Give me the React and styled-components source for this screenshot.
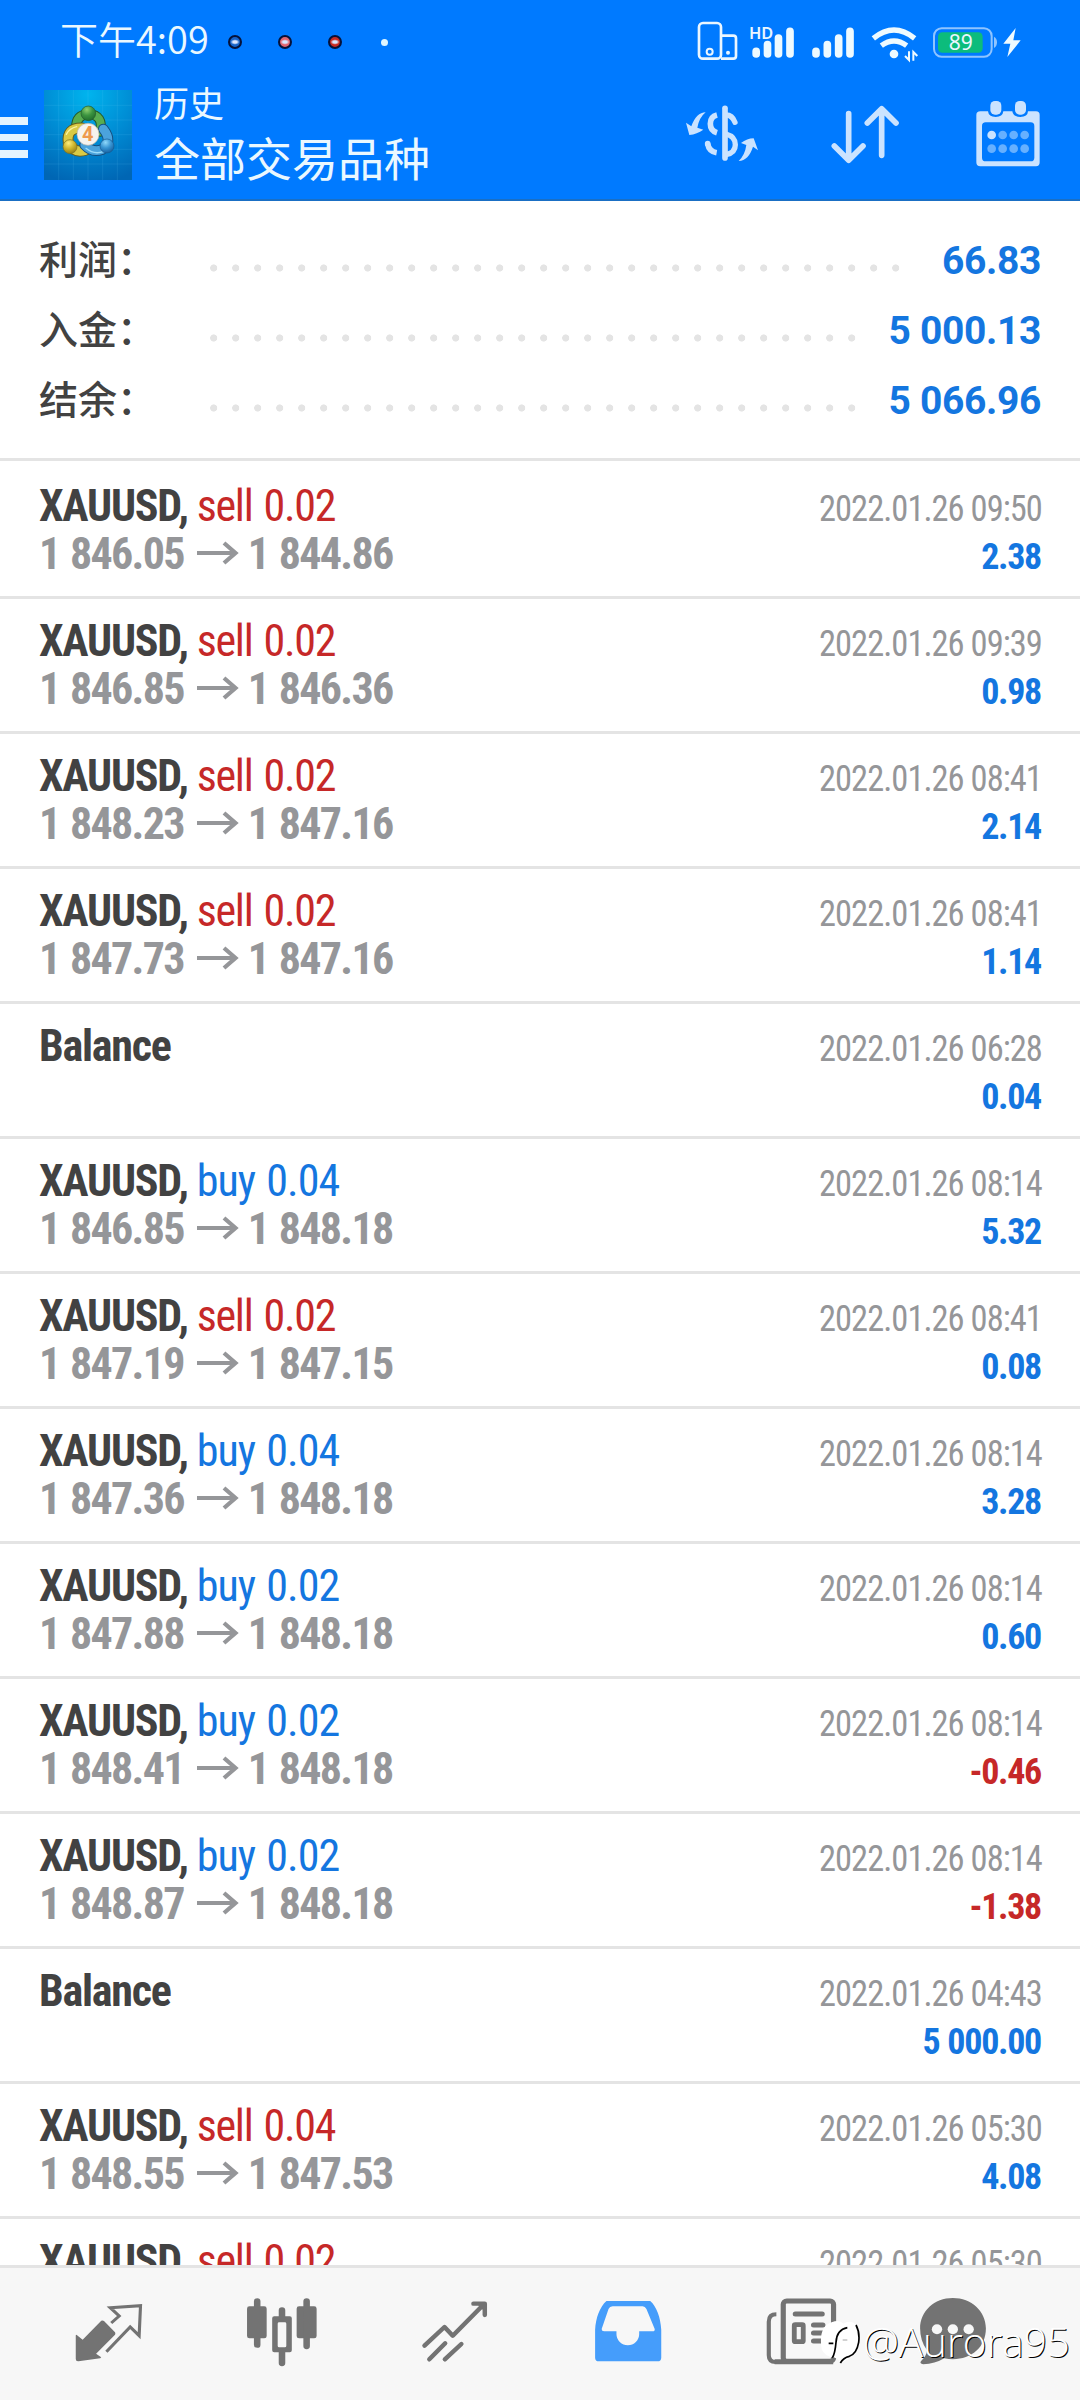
import styled, { createGlobalStyle } from "styled-components";

const SUMMARY = [
  { label: "利润：", value: "66.83", dots: 32 },
  { label: "入金：", value: "5 000.13", dots: 30 },
  { label: "结余：", value: "5 066.96", dots: 30 },
];

const DEALS = [
  { side: "sell", lot: "0.02", open: "1 846.05", close: "1 844.86", time: "2022.01.26 09:50", profit: "2.38" },
  { side: "sell", lot: "0.02", open: "1 846.85", close: "1 846.36", time: "2022.01.26 09:39", profit: "0.98" },
  { side: "sell", lot: "0.02", open: "1 848.23", close: "1 847.16", time: "2022.01.26 08:41", profit: "2.14" },
  { side: "sell", lot: "0.02", open: "1 847.73", close: "1 847.16", time: "2022.01.26 08:41", profit: "1.14" },
  { time: "2022.01.26 06:28", profit: "0.04" },
  { side: "buy", lot: "0.04", open: "1 846.85", close: "1 848.18", time: "2022.01.26 08:14", profit: "5.32" },
  { side: "sell", lot: "0.02", open: "1 847.19", close: "1 847.15", time: "2022.01.26 08:41", profit: "0.08" },
  { side: "buy", lot: "0.04", open: "1 847.36", close: "1 848.18", time: "2022.01.26 08:14", profit: "3.28" },
  { side: "buy", lot: "0.02", open: "1 847.88", close: "1 848.18", time: "2022.01.26 08:14", profit: "0.60" },
  { side: "buy", lot: "0.02", open: "1 848.41", close: "1 848.18", time: "2022.01.26 08:14", profit: "-0.46" },
  { side: "buy", lot: "0.02", open: "1 848.87", close: "1 848.18", time: "2022.01.26 08:14", profit: "-1.38" },
  { time: "2022.01.26 04:43", profit: "5 000.00" },
  { side: "sell", lot: "0.04", open: "1 848.55", close: "1 847.53", time: "2022.01.26 05:30", profit: "4.08" },
  { side: "sell", lot: "0.02", time: "2022.01.26 05:30" },
];

const StatusIcons = () => (
  <StatusSvg width="330" height="44" viewBox="165 55 990 132">
    {/* connected devices */}
    <g fill="none" stroke="#eaf6ff" strokeWidth="8">
      <rect x="177" y="67" width="66" height="107" rx="12" />
      <path d="M243 105h37q8 0 8 8v53q0 8-8 8h-37" />
      <circle cx="209" cy="153" r="9" strokeWidth="6" />
    </g>
    <circle cx="264" cy="156" r="6" fill="#eaf6ff" />
    {/* first sim */}
    <text x="327" y="114" fontSize="49" fontWeight="600" fill="#eaf6ff">HD</text>
    <g stroke="#eefaff" strokeWidth="23" strokeLinecap="round">
      <path d="M348.500 152v8M382.500 132v28M415.500 112v48M450 92v68" />
      <path d="M528 152v8M562 132v28M596 112v48M630 92v68" />
    </g>
    {/* wifi */}
    <g fill="none" stroke="#eefaff" strokeWidth="16">
      <path d="M700 113Q762 63 824 113" />
      <path d="M724 135Q762 107 800 135" />
    </g>
    <circle cx="762" cy="160" r="13" fill="#eefaff" />
    <path d="M807 152v26l-12-12M820 180v-26l12 12" fill="none" stroke="#eefaff" strokeWidth="6" />
    {/* battery */}
    <rect x="882" y="83" width="173" height="85" rx="23" fill="none" stroke="#8fc4ff" strokeWidth="6" />
    <path d="M1062 108q9 5 9 17t-9 17z" fill="#8fc4ff" />
    <rect x="894" y="95" width="134" height="61" rx="13" fill="#0cbc7c" />
    <text x="962" y="147" fontSize="63" textAnchor="middle" fill="#eaf6ff">89</text>
    <path d="M1127 82l-37 47h21l-9 40 40-50h-22z" fill="#eefaff" />
  </StatusSvg>
);

const AppLogo = () => (
  <LogoSvg width="88" height="90" viewBox="132 271 264 270">
    <defs>
      <radialGradient id="sky" cx="0.5" cy="0.05" r="1">
        <stop offset="0" stopColor="#00b4ee" />
        <stop offset="0.55" stopColor="#0089d2" />
        <stop offset="1" stopColor="#0066b4" />
      </radialGradient>
      <radialGradient id="green" cx="0.4" cy="0.25" r="0.8">
        <stop offset="0" stopColor="#8fd070" />
        <stop offset="0.5" stopColor="#3c9440" />
        <stop offset="1" stopColor="#1f6a2b" />
      </radialGradient>
      <radialGradient id="yellow" cx="0.4" cy="0.25" r="0.8">
        <stop offset="0" stopColor="#fdee7c" />
        <stop offset="0.5" stopColor="#cdb52e" />
        <stop offset="1" stopColor="#8f7a16" />
      </radialGradient>
      <radialGradient id="blue" cx="0.4" cy="0.25" r="0.8">
        <stop offset="0" stopColor="#8fd8fa" />
        <stop offset="0.5" stopColor="#3794d2" />
        <stop offset="1" stopColor="#155c9c" />
      </radialGradient>
    </defs>
    <rect x="132" y="271" width="264" height="270" fill="url(#sky)" />
    <path
      d="M176 271v270M220 271v270M264 271v270M308 271v270M352 271v270M132 317h264M132 361h264M132 405h264M132 449h264M132 493h264"
      stroke="#6fd0f5"
      strokeOpacity="0.2"
      strokeWidth="2"
    />
    <g fill="none" strokeLinecap="round">
      <path d="M300 396Q312 346 265 343Q228 346 228 384" stroke="#24592c" strokeWidth="30" />
      <path d="M300 396Q312 346 265 343Q228 346 228 384" stroke="#58ad50" strokeWidth="24" />
      <path d="M246 385Q198 384 205 430Q222 462 256 452" stroke="#655d1c" strokeWidth="33" />
      <path d="M246 385Q198 384 205 430Q222 462 256 452" stroke="#d9ca45" strokeWidth="27" />
      <path d="M254 436Q276 460 306 450Q340 426 310 388" stroke="#164f80" strokeWidth="32" />
      <path d="M254 436Q276 460 306 450Q340 426 310 388" stroke="#4ba3dc" strokeWidth="26" />
      <path d="M258 446Q282 466 310 456" stroke="#9cdcfa" strokeWidth="4" />
      <path d="M199 404Q208 386 230 381" stroke="#faf3a0" strokeWidth="4" />
    </g>
    <circle cx="265" cy="341" r="22" fill="url(#green)" stroke="#24592c" strokeWidth="2" />
    <circle cx="210" cy="441" r="21" fill="url(#yellow)" stroke="#7b7020" strokeWidth="2" />
    <circle cx="321" cy="439" r="21" fill="url(#blue)" stroke="#165a91" strokeWidth="2" />
    <circle cx="264" cy="404" r="33" fill="#f6f3ee" stroke="#b9b3a8" strokeWidth="2" />
    <text x="263" y="425" fontSize="60" fontWeight="700" textAnchor="middle" fill="#ee9a4d">4</text>
  </LogoSvg>
);

const CurrencyIcon = () => (
  <svg width="74" height="60" viewBox="135 312 222 180" fill="none" stroke="#cbe3ff" strokeLinecap="round">
    <path d="M255 325v149" strokeWidth="17" />
    <path d="M258 345q19 0 27 22" strokeWidth="16" />
    <path d="M258 402q28 8 28 32t-28 30" strokeWidth="16" />
    <path d="M231 345q-20 5-20 26t20 27" strokeWidth="17" strokeLinecap="butt" />
    <path d="M203 431q4 23 27 27" strokeWidth="17" strokeLinecap="butt" />
    <circle cx="203" cy="431" r="8.500" fill="#cbe3ff" stroke="none" />
    <path d="M197 337q-28 0-43 42l-16-11 10 37q23-3 42-16l-18-6q6-31 25-46z" fill="#cbe3ff" stroke="none" />
    <path d="M296 483q30-2 43-43l15 11-13-36q-20 0-38 14l16 6q-4 30-23 48z" fill="#cbe3ff" stroke="none" />
  </svg>
);

const SortIcon = () => (
  <svg width="70" height="60" viewBox="570 312 210 180" fill="none" stroke="#cbe3ff" strokeWidth="17" strokeLinecap="round" strokeLinejoin="round">
    <path d="M626 341v138M583 438l43 43 43-43" />
    <path d="M725 466V328M682 369l43-43 43 43" />
  </svg>
);

const CalendarIcon = () => (
  <svg width="64" height="66" viewBox="1009 302 192 198">
    <path
      fillRule="evenodd"
      fill="#cbe3ff"
      d="M1022 333H1045Q1047 350 1068 350T1091 333H1118Q1120 350 1142 350T1165 333H1189Q1200 333 1200 344V486Q1200 498 1189 498H1022Q1010 498 1010 486V344Q1010 333 1022 333ZM1038 366Q1027 366 1027 377V472Q1027 483 1038 483H1173Q1184 483 1184 472V377Q1184 366 1173 366Z"
    />
    <rect x="1052" y="302" width="33" height="41" rx="14" fill="#cbe3ff" />
    <rect x="1126" y="302" width="33" height="41" rx="14" fill="#cbe3ff" />
    <circle cx="1056" cy="404" r="13" fill="#cbe3ff" />
    <g fill="#66b0ff">
      <circle cx="1089" cy="404" r="13" />
      <circle cx="1122" cy="404" r="13" />
      <circle cx="1155" cy="404" r="13" />
      <circle cx="1056" cy="445" r="13" />
      <circle cx="1089" cy="445" r="13" />
      <circle cx="1122" cy="445" r="13" />
      <circle cx="1155" cy="445" r="13" />
    </g>
  </svg>
);

const QuotesIcon = () => (
  <svg width="72" height="72" viewBox="211 290 209 216" preserveAspectRatio="none">
    <path d="M221 403l18 15 54-57q4-2 8 1l32 34q2 4 0 7l-55 57 15 11-3 3-63 9q-8 1-8-7V405z" fill="#737373" />
    <path d="M322 368l23-21-26-25 88-6-4 90-26-26-69 74" fill="none" stroke="#737373" strokeWidth="9" />
  </svg>
);

const ChartIcon = () => (
  <svg width="72" height="72" viewBox="712 290 209 216" preserveAspectRatio="none" fill="#737373">
    <rect x="715" y="318" width="57" height="96" rx="7" />
    <rect x="859" y="318" width="58" height="96" rx="7" />
    <path
      fillRule="evenodd"
      d="M794 348H839Q845 348 845 354V450Q845 456 839 456H794Q788 456 788 450V354Q788 348 794 348ZM808 366Q804 366 804 370V437Q804 441 808 441H825Q829 441 829 437V370Q829 366 825 366Z"
    />
    <path d="M744.500 303v130M888 303v134M816.500 330v22M816.500 454v34" stroke="#737373" strokeWidth="19" strokeLinecap="round" />
  </svg>
);

const TradeIcon = () => (
  <svg width="72" height="72" viewBox="1215 290 209 216" preserveAspectRatio="none" fill="none" stroke="#737373" strokeWidth="13" strokeLinecap="round" strokeLinejoin="round">
    <path d="M1231 436l58-56 24 26 86-90" />
    <path d="M1373 310h33v34M1392 312l12 12" />
    <path d="M1245 477l46-48M1290 477l48-46" />
  </svg>
);

const HistoryIcon = () => (
  <svg width="72" height="72" viewBox="149 290 209 216" preserveAspectRatio="none">
    <path
      fillRule="evenodd"
      fill="#459dfb"
      d="M191 302H318C337 319 348 352 350 388V472Q350 483 339 483H169Q158 483 158 472V388C160 352 172 319 191 302ZM209 318Q200 318 197 326L177 386Q177 393 184 393H220V401A33 34 0 0 0 286 401V393H325Q332 393 331 386L307 326Q303 318 296 318Z"
    />
  </svg>
);

const NewsIcon = () => (
  <svg width="72" height="72" viewBox="652 290 209 216" preserveAspectRatio="none" fill="none" stroke="#737373">
    <path d="M685 342q-22 0-22 22v101q0 20 20 20h20" strokeWidth="12" />
    <rect x="705" y="302" width="146" height="181" rx="10" strokeWidth="15" />
    <path d="M680 484H850" strokeWidth="15" />
    <path d="M740 341h78M793 374h27M793 398h27M793 422h27" strokeWidth="15" strokeLinecap="round" />
    <rect x="737" y="373" width="26" height="51" rx="3" strokeWidth="14" />
  </svg>
);

const ChatIcon = () => (
  <svg width="72" height="72" viewBox="1095 290 209 216" preserveAspectRatio="none">
    <path
      d="M1199 293c54 0 96 40 96 91 0 66-56 103-121 90q-27 17-61 18-12-3-6-10 16-15 17-32-20-28-20-66c0-51 41-91 95-91z"
      fill="#737373"
    />
    <g fill="#f7f7f7">
      <circle cx="1153" cy="387" r="15" />
      <circle cx="1199" cy="387" r="15" />
      <circle cx="1245" cy="387" r="15" />
    </g>
  </svg>
);

const PriceArrow = () => (
  <ArrowSvg width="42" height="24" viewBox="0 0 42 24" fill="none" stroke="#959699" strokeWidth="4.200">
    <path d="M0 12h39M27 2l11.500 10L27 22" />
  </ArrowSvg>
);

const Deal = ({ deal }) => (
  <DealRow>
    <Line>
      {deal.side ? (
        <Symbol>
          XAUUSD, <Side $side={deal.side}>{deal.side} {deal.lot}</Side>
        </Symbol>
      ) : (
        <Symbol>Balance</Symbol>
      )}
      <Time>{deal.time}</Time>
    </Line>
    {deal.profit && (
      <Line>
        <Prices>
          {deal.side && (
            <>
              {deal.open}
              <PriceArrow />
              {deal.close}
            </>
          )}
        </Prices>
        <Profit $loss={deal.profit.startsWith("-")}>{deal.profit}</Profit>
      </Line>
    )}
  </DealRow>
);

export default function App() {
  return (
    <>
      <GlobalStyle />
      <Screen>
        <Header>
          <StatusBar>
            <Clock>下午4:09</Clock>
            <Notifications>
              <Notice $color="#1763c9" />
              <Notice $color="#e2646e" />
              <Notice $color="#c92a22" />
              <MoreDot />
            </Notifications>
            <StatusIcons />
          </StatusBar>
          <Toolbar>
            <Menu>
              <MenuBar />
              <MenuBar />
              <MenuBar />
            </Menu>
            <AppLogo />
            <Titles>
              <Caption>历史</Caption>
              <Title>全部交易品种</Title>
            </Titles>
            <Actions>
              <CurrencyIcon />
              <SortIcon />
              <CalendarIcon />
            </Actions>
          </Toolbar>
        </Header>

        <Summary>
          {SUMMARY.map((item) => (
            <SummaryRow key={item.label}>
              <Label>{item.label}</Label>
              <Leader $dots={item.dots} />
              <Amount>{item.value}</Amount>
            </SummaryRow>
          ))}
        </Summary>

        <DealList>
          {DEALS.map((deal, i) => (
            <Deal key={i} deal={deal} />
          ))}
        </DealList>

        <TabBar>
          <QuotesIcon />
          <ChartIcon />
          <TradeIcon />
          <HistoryIcon />
          <NewsIcon />
          <ChatIcon />
          <Watermark>
            <svg width="40" height="46" viewBox="60 240 120 138">
              <path d="M95 250Q118 240 130 254Q156 240 170 262Q182 300 166 340Q150 362 121 372Q116 356 92 354Q62 346 63 312Q60 262 95 250Z" fill="#fff" />
              <path d="M168 258q12 22 8 52-6 34-28 42-18 4-27 20" fill="none" stroke="#000" strokeWidth="5" />
              <path d="M97 356q8-12 11-46 2-38 34-44M86 313h14" fill="none" stroke="#000" strokeWidth="5" />
              <path d="M128 303h14" fill="none" stroke="#bbb" strokeWidth="4" />
            </svg>
            @Aurora95
          </Watermark>
        </TabBar>
      </Screen>
    </>
  );
}

const GlobalStyle = createGlobalStyle`
  * {
    box-sizing: border-box;
  }
  body {
    margin: 0;
    background: #fff;
    font-family: Roboto, "Noto Sans CJK SC", sans-serif;
  }
  svg {
    display: block;
    flex-shrink: 0;
  }
`;

const Screen = styled.div`
  display: flex;
  flex-direction: column;
  width: 1080px;
  height: 2400px;
  overflow: hidden;
  background: #fff;
`;

const Header = styled.header`
  flex: none;
  height: 201px;
  background: #007aff;
  border-bottom: 2px solid #1a6fc4;
  color: #eaf8ff;
  font-family: "Noto Sans CJK SC", sans-serif;
`;

// 状态栏
const StatusBar = styled.div`
  display: flex;
  align-items: center;
  height: 84px;
  padding: 0 0 0 60px;
`;

const Clock = styled.div`
  width: 168px;
  margin-top: -9px;
  font-size: 38px;
  font-weight: 350;
  line-height: 74px;
  white-space: nowrap;
`;

const Notifications = styled.div`
  display: flex;
  align-items: center;
  gap: 36px;
`;

const Notice = styled.span`
  width: 14px;
  height: 14px;
  border: 2px solid #05123a;
  border-radius: 50%;
  background: radial-gradient(ellipse 5px 3px, #dbe6ff 40%, ${(p) => p.$color} 90%);
`;

const MoreDot = styled.span`
  width: 7px;
  height: 7px;
  margin-left: 3px;
  border-radius: 50%;
  background: #dff6ff;
`;

const StatusSvg = styled.svg`
  margin: -3px 55px 0 auto;
  font-family: "Noto Sans", sans-serif;
`;

const Toolbar = styled.div`
  display: flex;
  align-items: flex-start;
  height: 115px;
`;

const Menu = styled.div`
  display: flex;
  flex-direction: column;
  gap: 9px;
  width: 28px;
  margin: 33px 16px 0 0;
`;

const MenuBar = styled.span`
  height: 7.500px;
  background: #e4f4ff;
`;

const LogoSvg = styled.svg`
  margin-top: 6px;
  font-family: Roboto, sans-serif;
`;

const Titles = styled.div`
  margin: -3px 0 0 22px;
  white-space: nowrap;
`;

const Caption = styled.div`
  font-size: 35px;
  line-height: 42px;
`;

const Title = styled.div`
  font-size: 46px;
  line-height: 66px;
`;

const Actions = styled.div`
  display: grid;
  grid-template-columns: 145px 146px 64px;
  align-items: center;
  height: 100px;
  margin: 0 40px 0 auto;
`;

// 利润 / 入金 / 结余
const Summary = styled.section`
  flex: none;
  height: 260px;
  padding: 24px 39px 0;
  border-bottom: 3px solid #e4e4e4;
`;

const SummaryRow = styled.div`
  display: flex;
  align-items: center;
  height: 70px;
`;

const Label = styled.div`
  width: 164px;
  margin-top: -7px;
  color: #424242;
  font-family: "Noto Sans CJK SC", sans-serif;
  font-size: 39px;
  font-weight: 500;
  line-height: 70px;
  white-space: nowrap;
`;

const Leader = styled.div`
  width: ${(p) => p.$dots * 22}px;
  height: 8px;
  margin-top: 15px;
  background: radial-gradient(circle at 10.700px 4px, #e4e4e4 3.200px, transparent 3.900px) 0 0 / 22px 8px repeat-x;
`;

const Amount = styled.div`
  margin: 2px 0 0 auto;
  color: #1476e0;
  font-size: 39px;
  font-weight: 700;
  letter-spacing: -0.350px;
  line-height: 70px;
`;

const DealList = styled.main`
  flex: 1;
  min-height: 0;
  overflow: hidden;
  padding-top: 3px;
  font-family: "Roboto Condensed", Roboto, sans-serif;
`;

const DealRow = styled.div`
  height: 135px;
  padding: 18px 39px 0;
  border-bottom: 3px solid #e4e4e4;
`;

const Line = styled.div`
  display: flex;
  align-items: baseline;
  justify-content: space-between;
  height: 48px;
  line-height: 48px;
  white-space: nowrap;
`;

const Symbol = styled.div`
  color: #424242;
  font-size: 44px;
  font-weight: 700;
  letter-spacing: -1.250px;
`;

const Side = styled.span`
  color: ${(p) => (p.$side === "sell" ? "#c62828" : "#1476e0")};
  font-weight: 400;
  letter-spacing: ${(p) => (p.$side === "sell" ? "-1.250px" : "-0.950px")};
  word-spacing: 2px;
`;

const Time = styled.div`
  margin-right: -1px;
  color: #959699;
  font-size: 36px;
  letter-spacing: -1px;
  transform: scaleX(0.957);
  transform-origin: right;
`;

const Prices = styled.div`
  color: #959699;
  font-size: 44px;
  font-weight: 700;
  letter-spacing: -1.700px;
  word-spacing: 2px;

  /* keeps the baseline when there are no prices */
  &::before {
    content: "\\200b";
    letter-spacing: 0;
  }
`;

const ArrowSvg = styled.svg`
  && {
    display: inline-block;
  }
  margin: 0 9px 4px 13px;
`;

const Profit = styled.div`
  color: ${(p) => (p.$loss ? "#c62828" : "#1476e0")};
  font-size: 36px;
  font-weight: 700;
  letter-spacing: -1.300px;
  word-spacing: 1px;
`;

const TabBar = styled.nav`
  position: relative;
  flex: none;
  display: grid;
  grid-template-columns: repeat(4, 173px) 152px 72px;
  height: 135px;
  padding: 29px 0 0 73px;
  border-top: 3px solid #e4e4e4;
  background: #f7f7f7;
`;

const Watermark = styled.div`
  position: absolute;
  right: 10px;
  top: 51px;
  display: flex;
  align-items: center;
  gap: 3px;
  height: 50px;
  color: #fff;
  font-family: "Open Sans", sans-serif;
  font-size: 40.500px;
  font-weight: 300;
  line-height: 40px;
  padding-bottom: 4px;
  text-shadow: 1px 1px 0 #000;
`;
